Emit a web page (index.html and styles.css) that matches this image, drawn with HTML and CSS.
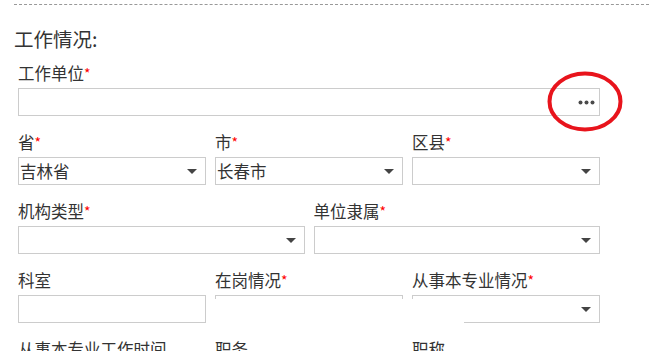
FILE: index.html
```html
<!DOCTYPE html>
<html lang="zh-CN">
<head>
    <meta charset="UTF-8">
    <title>工作情况</title>
    <link rel="stylesheet" href="styles.css">
</head>
<body>

    <div class="section">
        <div class="divider"></div>
        <h3 class="sec-title">工作情况:</h3>

        <div class="form">
            <div class="row">
                <div class="field">
                    <label>工作单位<span class="req">*</span></label>
                    <div class="picker">
                        <input type="text" class="box">
                        <svg class="dots" width="17" height="5" viewBox="0 0 17 5">
                            <circle cx="2.5" cy="2.5" r="2" fill="#4a4a4a"/>
                            <circle cx="8.5" cy="2.5" r="2" fill="#4a4a4a"/>
                            <circle cx="14.5" cy="2.5" r="2" fill="#4a4a4a"/>
                        </svg>
                        <svg class="mark" width="76" height="61" viewBox="0 0 76 61">
                            <ellipse cx="38" cy="30.5" rx="35.5" ry="28" fill="none" stroke="#e8141c" stroke-width="4"/>
                        </svg>
                    </div>
                </div>
            </div>

            <div class="row cols-3">
                <div class="field">
                    <label>省<span class="req">*</span></label>
                    <div class="select"><span class="val">吉林省</span></div>
                </div>
                <div class="field">
                    <label>市<span class="req">*</span></label>
                    <div class="select"><span class="val">长春市</span></div>
                </div>
                <div class="field">
                    <label>区县<span class="req">*</span></label>
                    <div class="select"><span class="val"></span></div>
                </div>
            </div>

            <div class="row cols-2">
                <div class="field">
                    <label>机构类型<span class="req">*</span></label>
                    <div class="select"><span class="val"></span></div>
                </div>
                <div class="field">
                    <label>单位隶属<span class="req">*</span></label>
                    <div class="select"><span class="val"></span></div>
                </div>
            </div>

            <div class="row cols-3">
                <div class="field">
                    <label>科室</label>
                    <input type="text" class="box">
                </div>
                <div class="field">
                    <label>在岗情况<span class="req">*</span></label>
                    <div class="select"><span class="val"></span></div>
                    <!-- dropdown list opened under the field, still empty -->
                    <div class="popup"></div>
                </div>
                <div class="field">
                    <label>从事本专业情况<span class="req">*</span></label>
                    <div class="select"><span class="val"></span></div>
                </div>
            </div>

            <div class="row cols-3">
                <div class="field">
                    <label>从事本专业工作时间</label>
                    <input type="text" class="box">
                </div>
                <div class="field">
                    <label>职务</label>
                    <input type="text" class="box">
                </div>
                <div class="field">
                    <label>职称</label>
                    <input type="text" class="box">
                </div>
            </div>
        </div>
    </div>

</body>
</html>
```

FILE: styles.css
```css
body {
    margin: 0;
    background: #fff;
    font-family: "Noto Sans CJK SC", "Noto Sans", sans-serif;
    color: #333;
    overflow: hidden;
}

.section {
    padding: 4px 0 0 14px;
}

.divider {
    border-top: 1px dashed #999;
}

.sec-title {
    margin: 0;
    padding-top: 20px;
    font-size: 19.5px;
    font-weight: normal;
    line-height: 28px;
    color: #333;
}

.form {
    width: 582px;
    padding: 10px 0 0 4px;
}

.row {
    display: grid;
    grid-template-columns: 1fr;
    column-gap: 9px;
    margin-bottom: 16px;
}

.cols-3 { grid-template-columns: repeat(3, 1fr); }
.cols-2 { grid-template-columns: repeat(2, 1fr); }

.field {
    position: relative;
}

.field label {
    display: block;
    height: 20px;
    font-size: 16.5px;
    line-height: 20px;
    margin-bottom: 5px;
    white-space: nowrap;
}

.req {
    color: #ff0000;
    font-size: 14px;
    vertical-align: top;
}

.box {
    display: block;
    box-sizing: border-box;
    width: 100%;
    height: 28px;
    margin: 0;
    border: 1px solid #ccc;
    background: #fff;
    font: inherit;
}

.picker {
    position: relative;
}

.dots {
    position: absolute;
    right: 5px;
    top: 12px;
}

.mark {
    position: absolute;
    right: -23px;
    top: -17px;
}

.select {
    position: relative;
    box-sizing: border-box;
    height: 28px;
    border: 1px solid #ccc;
    background: #fff;
}

.select .val {
    display: block;
    padding-left: 1px;
    font-size: 16.5px;
    line-height: 26px;
}

.select::after {
    content: "";
    position: absolute;
    right: 8px;
    top: 11px;
    border-left: 5px solid transparent;
    border-right: 5px solid transparent;
    border-top: 5px solid #444;
}

.popup {
    position: absolute;
    z-index: 5;
    left: -1px;
    top: 29px;
    width: 250px;
    height: 30px;
    background: #fff;
}
```
